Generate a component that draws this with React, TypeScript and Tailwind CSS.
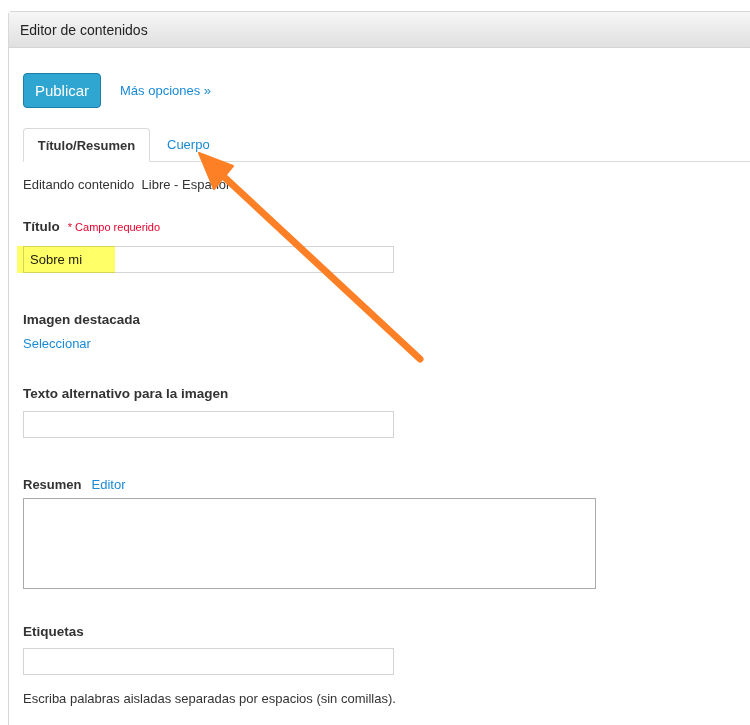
import React from "react"

const font = { fontFamily: '"Liberation Sans", Arial, sans-serif' }

const Label = ({ children, className = "" }: { children: React.ReactNode; className?: string }) => (
    <div className={`text-[13.5px] leading-[18px] font-bold text-[#333] ${className}`}>{children}</div>
)

const TextInput = ({ className = "" }: { className?: string }) => (
    <div className={`h-[27px] w-[371px] border border-[#d4d4d4] bg-white ${className}`} />
)

export default function App() {
    return (
        <div className="relative w-[750px] h-[725px] overflow-hidden bg-white" style={font}>
            <div className="ml-[8px] mt-[11px] w-[760px] border-l border-t border-[#d8d8d8] rounded-tl-[4px]">
                <div className="h-[36px] border-b border-[#d4d4d4] bg-gradient-to-b from-[#f6f6f6] to-[#e0e0e0] pl-[11px] pt-px flex items-center text-[14px] text-[#222]">
                    Editor de contenidos
                </div>
                <div className="pl-[14px] pt-[25px] pb-10">
                    <div className="flex items-center">
                        <button className="h-[35px] w-[78px] rounded-[4px] border border-[#1c7ea8] bg-[#2fa5d1] pt-px text-white text-[15px]">
                            Publicar
                        </button>
                        <a className="ml-[19px] pt-px text-[13px] text-[#1a8ad6]">Más opciones »</a>
                    </div>

                    <div className="mt-[20px] flex border-b border-[#d9d9d9]">
                        <div className="-mb-px h-[34px] w-[127px] border border-[#d9d9d9] border-b-white bg-white rounded-t-[4px] pt-px flex items-center justify-center text-[13px] font-bold text-[#333]">
                            Título/Resumen
                        </div>
                        <div className="h-[33px] pl-[17px] pt-px flex items-center text-[13px] text-[#1a8ad6]">Cuerpo</div>
                    </div>

                    <div className="mt-[14px] text-[13px] leading-[18px] text-[#333]">
                        Editando contenido&nbsp; Libre - Español
                    </div>

                    <Label className="mt-[24px] flex items-baseline">
                        Título
                        <span className="ml-[8px] text-[11px] font-normal text-[#e8002a]">* Campo requerido</span>
                    </Label>
                    <div className="relative mt-[10px]">
                        <div className="h-[27px] w-[371px] border border-[#d4d4d4] bg-white pl-[6px] flex items-center text-[13px] text-[#222]">
                            Sobre mi
                        </div>
                        <div className="absolute left-[-6px] top-0 h-[27px] w-[98px] bg-[#ffff33] opacity-75 mix-blend-multiply" />
                    </div>

                    <Label className="mt-[38px]">Imagen destacada</Label>
                    <div className="mt-[6px] text-[13px] leading-[18px] text-[#1a8ad6]">Seleccionar</div>

                    <Label className="mt-[32px]">Texto alternativo para la imagen</Label>
                    <TextInput className="mt-[8px]" />

                    <div className="mt-[38px] flex items-baseline text-[13px] leading-[18px]">
                        <span className="font-bold text-[13px] text-[#333]">Resumen</span>
                        <span className="ml-[10px] text-[#1a8ad6]">Editor</span>
                    </div>
                    <div className="mt-[4px] h-[91px] w-[573px] border border-[#aaaaaa] bg-white" />

                    <Label className="mt-[34px]">Etiquetas</Label>
                    <TextInput className="mt-[7px]" />

                    <div className="mt-[15px] text-[13px] leading-[18px] text-[#333]">
                        Escriba palabras aisladas separadas por espacios (sin comillas).
                    </div>
                </div>
            </div>

            <svg className="absolute left-0 top-0 pointer-events-none" width="750" height="725">
                <line x1="420" y1="359" x2="222" y2="175" stroke="#fd8026" strokeWidth="7" strokeLinecap="round" />
                <polygon points="199,153 233,166 214,189" fill="#fd8026" stroke="#fd8026" strokeWidth="2" strokeLinejoin="round" />
            </svg>
        </div>
    )
}
